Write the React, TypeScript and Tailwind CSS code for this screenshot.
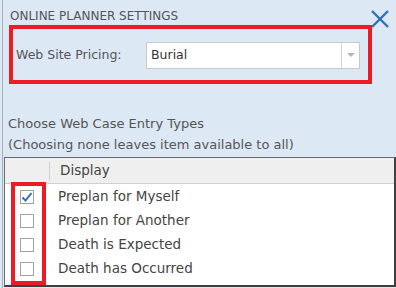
import React from "react";

const rows = [
  { label: "Preplan for Myself", checked: true },
  { label: "Preplan for Another", checked: false },
  { label: "Death is Expected", checked: false },
  { label: "Death has Occurred", checked: false },
];

export default function App() {
  return (
    <div
      className="w-[396px] h-[288px] bg-[#dce8f4] overflow-hidden pl-[2px] text-[#555555]"
      style={{ fontFamily: '"DejaVu Sans", sans-serif' }}
    >
      <div className="relative h-full border-l border-[#a7b0ba] flex flex-col">
        {/* close X */}
        <svg
          className="absolute left-[367px] top-[10px]"
          width="20"
          height="18"
          viewBox="0 0 20 18"
        >
          <path d="M2 1 L18 17 M18 1 L2 17" stroke="#2f6fb8" strokeWidth="2.4" fill="none" />
        </svg>

        <div className="pl-[7px] pt-[8px] text-[12px] leading-[16px] tracking-[0px]">
          ONLINE PLANNER SETTINGS
        </div>

        <div className="ml-[6px] mt-[1px] w-[363px] h-[59px] border-[4px] border-[#ec1c24] flex items-center pl-[3px] pt-[2px]">
          <span className="text-[12.5px] w-[130px]">Web Site Pricing:</span>
          <div className="w-[214px] h-[27px] bg-white border border-[#c9c9c9] flex items-stretch">
            <div className="flex-1 flex items-center pl-[4px] text-[12.5px] text-[#333333]">Burial</div>
            <div className="w-[18px] border-l border-[#d4d4d4] flex items-center justify-center">
              <svg width="8" height="5" viewBox="0 0 8 5">
                <path d="M0 0 L8 0 L4 4 Z" fill="#b5b5b5" />
              </svg>
            </div>
          </div>
        </div>

        <div className="pl-[5px] mt-[29px] text-[13px] leading-[21px]">
          <div>Choose Web Case Entry Types</div>
          <div>(Choosing none leaves item available to all)</div>
        </div>

        <div className="relative ml-[1px] mt-[2px] flex-1 mb-[1px] bg-white border-l border-t border-[#6b6b6b] border-r-2 border-b-2 border-r-[#3f3f3f] border-b-[#3f3f3f] flex flex-col">
          <div className="h-[26px] bg-[#efefef] border-b border-[#cfcfcf] flex items-center">
            <div className="w-[45px] h-[18px] border-r border-[#cfcfcf]" />
            <div className="pl-[10px] text-[13.5px] text-[#444444]">Display</div>
          </div>
          {rows.map((r) => (
            <div key={r.label} className="h-6 flex items-center">
              <div className="w-[53px] pl-[15px] pt-[2px]">
                <div className="w-[14px] h-[14px] border border-[#a0a0a0] bg-white flex items-center justify-center">
                  {r.checked && (
                    <svg width="12" height="12" viewBox="0 0 12 12">
                      <path d="M1.5 6.5 L4.5 9.5 L10.5 2" stroke="#2f6fb8" strokeWidth="2" fill="none" />
                    </svg>
                  )}
                </div>
              </div>
              <div className="text-[13.5px] text-[#444444]">{r.label}</div>
            </div>
          ))}
          <div className="absolute left-[6px] top-[24px] w-[35px] h-[103px] border-[4px] border-[#ec1c24]" />
        </div>
      </div>
    </div>
  );
}
